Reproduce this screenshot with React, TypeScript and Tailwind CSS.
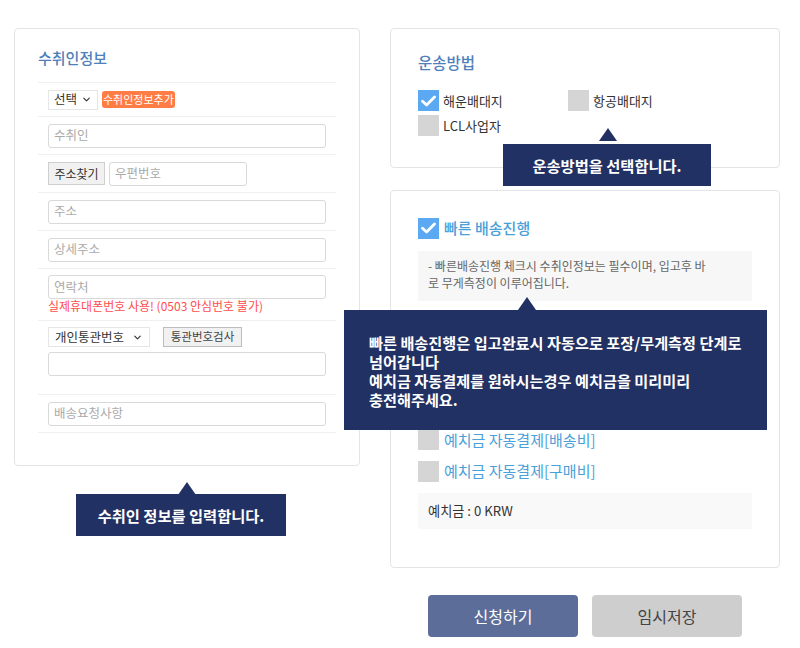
import { ChevronDown } from "lucide-react";

const font = { fontFamily: '"Noto Sans CJK KR", "Noto Sans", sans-serif' };

function Check({ on }: { on?: boolean }) {
  return on ? (
    <span className="flex h-[21px] w-[21px] shrink-0 items-center justify-center bg-[#5aa9f2]">
      <svg width="15" height="12" viewBox="0 0 15 12">
        <path d="M1.5 6.2 L5.6 10 L13.5 2" fill="none" stroke="#fff" strokeWidth="2.8" strokeLinecap="round" strokeLinejoin="round" />
      </svg>
    </span>
  ) : (
    <span className="h-[21px] w-[21px] shrink-0 bg-[#d5d5d5]" />
  );
}

function Field({ ph, w = "w-[278px]" }: { ph?: string; w?: string }) {
  return (
    <div className={`flex h-[24px] ${w} items-center rounded-[3px] border border-[#d9d9d9] bg-white px-[5px] text-[12.5px] text-[#aaa]`}>
      {ph}
    </div>
  );
}

function Tip({ children, className }: { children: React.ReactNode; className: string }) {
  return <div className={`absolute bg-[#223163] text-white font-bold ${className}`}>{children}</div>;
}

function Arrow({ className }: { className: string }) {
  return (
    <span
      className={`absolute h-0 w-0 border-x-[9px] border-b-[13px] border-x-transparent border-b-[#223163] ${className}`}
    />
  );
}

export default function App() {
  return (
    <div className="relative flex w-[800px] gap-[30px] pl-[14px] pt-[28px]" style={font}>
      {/* left column */}
      <div className="relative w-[346px]">
        <div className="rounded-[4px] border border-[#e4e4e4] bg-white px-[23px] pb-[32px] pt-[16px]">
          <h2 className="h-[37px] text-[15px] leading-[26px] font-medium text-[#4f80bb]">수취인정보</h2>
          <div className="border-t border-[#efefef]">
            <div className="flex h-[34px] items-center gap-[4px] border-b border-[#efefef] px-[10px]">
              <div className="flex h-[20px] w-[50px] items-center justify-between border border-[#e6e6e6] px-[5px] text-[12.5px] text-[#333]">
                선택
                <ChevronDown size={11} strokeWidth={2.5} />
              </div>
              <span className="rounded-[3px] bg-[#ff7d45] px-[1px] text-[11px] leading-[17px] text-white">수취인정보추가</span>
            </div>
            <div className="flex h-[38px] items-center border-b border-[#efefef] px-[10px]">
              <Field ph="수취인" />
            </div>
            <div className="flex h-[38px] items-center gap-[4px] border-b border-[#efefef] px-[10px]">
              <div className="flex h-[23px] w-[57px] items-center justify-center border border-[#cfcfcf] bg-[#f1f1f1] text-[12px] text-[#333]">
                주소찾기
              </div>
              <Field ph="우편번호" w="w-[138px]" />
            </div>
            <div className="flex h-[38px] items-center border-b border-[#efefef] px-[10px]">
              <Field ph="주소" />
            </div>
            <div className="flex h-[38px] items-center border-b border-[#efefef] px-[10px]">
              <Field ph="상세주소" />
            </div>
            <div className="flex h-[52px] flex-col border-b border-[#efefef] px-[10px] pt-[6px]">
              <Field ph="연락처" />
              <p className="text-[12px] leading-[14px] text-[#ff4d4d]">실제휴대폰번호 사용! (0503 안심번호 불가)</p>
            </div>
            <div className="flex h-[74px] flex-col gap-[5px] border-b border-[#efefef] px-[10px] pt-[6px]">
              <div className="flex items-center gap-[13px]">
                <div className="flex h-[20px] w-[102px] items-center justify-between border border-[#e6e6e6] px-[6px] text-[12.5px] text-[#333]">
                  개인통관번호
                  <ChevronDown size={11} strokeWidth={2.5} />
                </div>
                <div className="flex h-[20px] w-[79px] items-center justify-center border border-[#bdbdbd] bg-[#f1f1f1] text-[11.5px] text-[#444]">
                  통관번호검사
                </div>
              </div>
              <Field />
            </div>
            <div className="flex h-[38px] items-center border-b border-[#efefef] px-[10px]">
              <Field ph="배송요청사항" />
            </div>
          </div>
        </div>
        <div className="relative ml-[62px] mt-[28px] h-[42px] w-[210px]">
          <Arrow className="left-[102px] top-[-12px]" />
          <Tip className="inset-0 flex items-center justify-center text-[15.3px]">수취인 정보를 입력합니다.</Tip>
        </div>
      </div>

      {/* right column */}
      <div className="relative flex w-[390px] flex-col">
        <div className="relative h-[140px] rounded-[4px] border border-[#e4e4e4] bg-white px-[27px] pt-[22px]">
          <h2 className="h-[39px] text-[15.5px] leading-[23px] font-medium text-[#4f80bb]">운송방법</h2>
          <div className="grid grid-cols-[150px_1fr] gap-y-[4px] text-[13px] text-[#333]">
            <label className="flex items-center gap-[4px]"><Check on />해운배대지</label>
            <label className="flex items-center gap-[4px]"><Check />항공배대지</label>
            <label className="flex items-center gap-[4px]"><Check />LCL사업자</label>
          </div>
        </div>

        <div className="mt-[22px] h-[378px] rounded-[4px] border border-[#e4e4e4] bg-white px-[27px] pt-[26px]">
          <label className="flex items-center gap-[5px] text-[15px] font-medium text-[#4aa0d8]"><Check on />빠른 배송진행</label>
          <div className="mt-[11px] bg-[#f7f7f7] px-[10px] pb-[10px] pt-[6px] text-[12px] leading-[17px] text-[#666]">
            - 빠른배송진행 체크시 수취인정보는 필수이며, 입고후 바<br />로 무게측정이 이루어집니다.
          </div>
          <div className="mt-[128px] flex flex-col gap-[9px] text-[15px] text-[#4aa0d8]">
            <label className="flex items-center gap-[5px]"><Check />예치금 자동결제[배송비]</label>
            <label className="flex items-center gap-[5px]"><Check />예치금 자동결제[구매비]</label>
          </div>
          <div className="mt-[10px] flex h-[36px] items-center bg-[#f9f9f9] px-[10px] text-[13.2px] text-[#333]">예치금 : 0 KRW</div>
        </div>

        <div className="mt-[27px] flex justify-center gap-[14px] pb-[12px]">
          <button className="h-[42px] w-[150px] rounded-[4px] bg-[#5d6d9a] text-[16px] text-white" type="button">신청하기</button>
          <button className="h-[42px] w-[150px] rounded-[4px] bg-[#cecece] text-[16px] text-[#444]" type="button">임시저장</button>
        </div>

        {/* tooltips */}
        <Arrow className="left-[209px] top-[100px]" />
        <Tip className="left-[113px] top-[116px] flex h-[42px] w-[208px] items-center justify-center text-[15.3px]">
          운송방법을 선택합니다.
        </Tip>
        <Arrow className="left-[128px] top-[269px]" />
        <Tip className="left-[-46px] top-[282px] h-[120px] w-[423px] whitespace-nowrap pl-[25px] pr-[8px] pt-[23px] text-[15.2px] leading-[19px]">
          빠른 배송진행은 입고완료시 자동으로 포장/무게측정 단계로
          <br />
          넘어갑니다
          <br />
          예치금 자동결제를 원하시는경우 예치금을 미리미리
          <br />
          충전해주세요.
        </Tip>
      </div>
    </div>
  );
}
